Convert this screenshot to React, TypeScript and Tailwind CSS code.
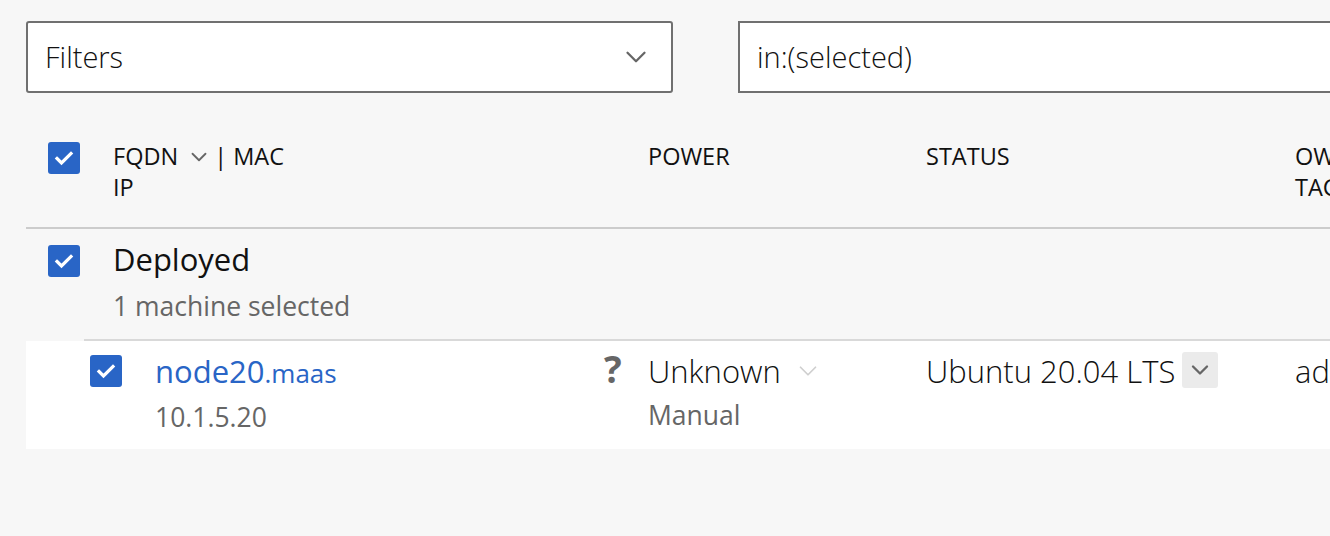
import { ChevronDown } from "lucide-react";

function Check({ className = "" }: { className?: string }) {
  return (
    <span
      className={`flex h-[32px] w-[32px] shrink-0 items-center justify-center rounded-[3px] bg-[#2965c6] ${className}`}
    >
      <svg width="20" height="16" viewBox="0 0 20 16" fill="none">
        <path d="M3 8.5l4.5 4.5L17 3.5" stroke="#fff" strokeWidth="3.2" strokeLinecap="square" />
      </svg>
    </span>
  );
}

export default function App() {
  return (
    <div className="h-[536px] w-full overflow-hidden bg-[#f7f7f7] font-['Open_Sans',sans-serif] text-[#111]">
      {/* Toolbar */}
      <div className="flex items-start gap-[65px] pl-[26px] pt-[21px]">
        <div className="flex h-[72px] w-[647px] shrink-0 items-center justify-between rounded-[3px] border-2 border-[#707070] bg-white pl-[17px] pr-[18px]">
          <span className="text-[29px] font-light">Filters</span>
          <ChevronDown size={34} strokeWidth={1.6} className="text-[#666]" />
        </div>
        <div className="flex h-[72px] w-[700px] shrink-0 items-center border-2 border-[#707070] bg-white pl-[17px]">
          <span className="text-[29px] font-light">in:(selected)</span>
        </div>
      </div>

      {/* Table */}
      <div className="ml-[26px] mt-[37px] w-[1400px]">
        {/* Header */}
        <div className="flex h-[99px] border-b-2 border-[#cccccc] pt-[11px] text-[23.5px] uppercase leading-[31px]">
          <div className="flex w-[579px] shrink-0 pl-[22px]">
            <Check className="mt-[1px]" />
            <div className="ml-[33px]">
              <div className="flex items-center">
                FQDN
                <ChevronDown size={26} strokeWidth={1.7} className="ml-[8px] text-[#666]" />
                <span className="ml-[2px]">| MAC</span>
              </div>
              <div>IP</div>
            </div>
          </div>
          <div className="w-[321px] shrink-0 pl-[43px]">Power</div>
          <div className="w-[369px] shrink-0">Status</div>
          <div>
            <div>Owner</div>
            <div>Tags</div>
          </div>
        </div>

        {/* Group row */}
        <div className="flex pl-[22px] pt-[16px]">
          <Check />
          <div className="ml-[33px]">
            <div className="mt-[-6px] text-[31px] leading-[40px]">Deployed</div>
            <div className="mt-[9px] text-[26.5px] leading-[36px] text-[#666]">1 machine selected</div>
          </div>
        </div>
        <div className="ml-[58px] mt-[15px] h-[2px] bg-[#d9d9d9]" />

        {/* Machine row */}
        <div className="flex h-[108px] bg-white pt-[14px]">
          <div className="flex w-[570px] shrink-0 pl-[64px]">
            <Check />
            <div className="ml-[33px]">
              <div className="mt-[-4px] leading-[40px] text-[#2965c6]">
                <span className="text-[31px]">node20</span>
                <span className="text-[26px]">.maas</span>
              </div>
              <div className="mt-[2px] text-[26.5px] leading-[36px] text-[#666]">10.1.5.20</div>
            </div>
          </div>
          <div className="flex w-[330px] shrink-0">
            <span className="mt-[-6px] w-[52px] pl-[8px] text-[37px] font-bold leading-[40px] text-[#666]">?</span>
            <div>
              <div className="mt-[-4px] flex items-center leading-[40px]">
                <span className="text-[31px] font-light">Unknown</span>
                <ChevronDown size={30} strokeWidth={1.4} className="ml-[12px] text-[#cfcfcf]" />
              </div>
              <div className="mt-[6px] text-[26.5px] leading-[36px] text-[#666]">Manual</div>
            </div>
          </div>
          <div className="flex w-[369px] shrink-0 items-start">
            <span className="mt-[-4px] text-[31px] font-light leading-[40px]">Ubuntu 20.04 LTS</span>
            <span className="ml-[7px] mt-[-3px] flex h-[36px] w-[36px] items-center justify-center rounded-[3px] bg-[#ebebeb]">
              <ChevronDown size={28} strokeWidth={2} className="text-[#666]" />
            </span>
          </div>
          <span className="mt-[-4px] text-[31px] font-light leading-[40px]">admin</span>
        </div>
      </div>
    </div>
  );
}
